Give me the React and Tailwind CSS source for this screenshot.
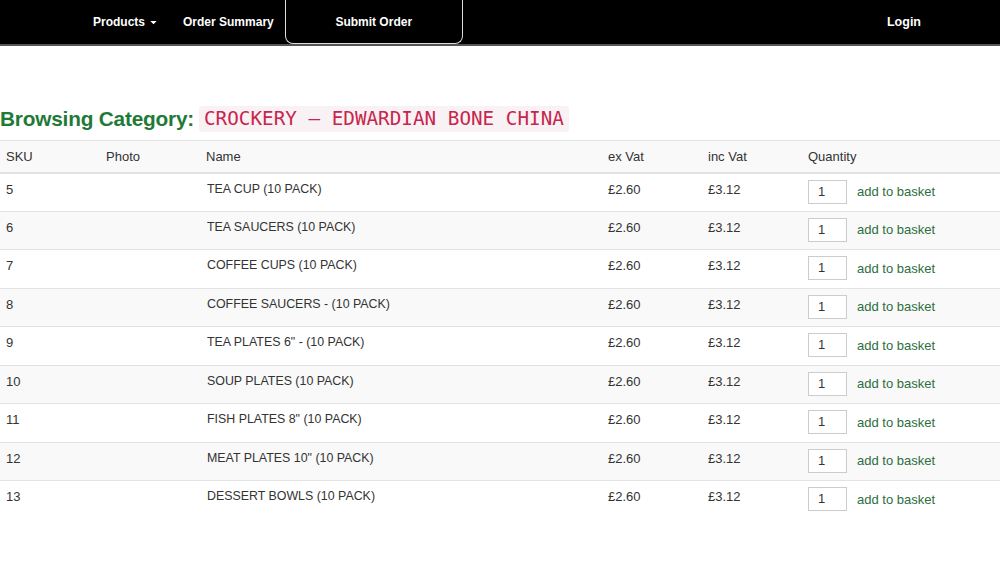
import React from "react";

const rows = [
  ["5", "TEA CUP (10 PACK)"],
  ["6", "TEA SAUCERS (10 PACK)"],
  ["7", "COFFEE CUPS (10 PACK)"],
  ["8", "COFFEE SAUCERS - (10 PACK)"],
  ["9", "TEA PLATES 6\" - (10 PACK)"],
  ["10", "SOUP PLATES (10 PACK)"],
  ["11", "FISH PLATES 8\" (10 PACK)"],
  ["12", "MEAT PLATES 10\" (10 PACK)"],
  ["13", "DESSERT BOWLS (10 PACK)"],
];

export default function App() {
  return (
    <div className="w-[1000px] h-[562px] bg-white overflow-hidden text-[#333]" style={{ fontFamily: '"Liberation Sans", Arial, sans-serif' }}>
      <nav className="h-[46px] bg-black border-b-2 border-[#555] flex items-center text-white text-[12px] font-bold">
        <div className="w-[93px]" />
        <div className="flex items-center gap-[5px]">
          <span>Products</span>
          <svg width="7" height="4" viewBox="0 0 8 5" className="mt-[1px]"><path d="M0 0 L8 0 L4 4 Z" fill="white" /></svg>
        </div>
        <div className="ml-[26px]">Order Summary</div>
        <div className="ml-[11px] w-[178px] h-[46px] mt-[-2px] border-[1.5px] border-t-0 border-[#ddd] rounded-b-[8px] flex items-center justify-center pt-[3px]">
          Submit Order
        </div>
        <div className="ml-auto mr-[79px] text-[12.5px]">Login</div>
      </nav>
      <div className="h-[58px]" />
      <h3 className="flex items-center h-[30px] text-[20.8px] text-[#1f7a37] leading-none">
        <span className="font-bold tracking-[-0.2px]">Browsing Category:</span>
        <code className="ml-[5px] px-[5px] py-[3px] bg-[#f9f2f4] text-[#c7254e] rounded-[3px] text-[19.3px] font-normal" style={{ fontFamily: '"DejaVu Sans Mono", "Liberation Mono", monospace' }}>
          CROCKERY – EDWARDIAN BONE CHINA
        </code>
      </h3>
      <div className="h-[6px]" />
      <table className="w-[1000px] border-collapse text-[13px] table-fixed">
        <colgroup>
          <col className="w-[100px]" />
          <col className="w-[100px]" />
          <col className="w-[400px]" />
          <col className="w-[100px]" />
          <col className="w-[100px]" />
          <col className="w-[200px]" />
        </colgroup>
        <thead>
          <tr className="bg-[#f9f9f9] h-[32px] border-t border-[#e3e3e3] border-b-2">
            {["SKU", "Photo", "Name", "ex Vat", "inc Vat", "Quantity"].map((h, i) => (
              <th key={h} className={`text-left font-normal align-middle pt-[1px] ${i >= 3 ? "px-[8px]" : "px-[6px]"}`}>{h}</th>
            ))}
          </tr>
        </thead>
        <tbody>
          {rows.map(([sku, name], i) => (
            <tr key={sku} className={`h-[38.5px] border-t border-[#e3e3e3] ${i % 2 === 1 ? "bg-[#f9f9f9]" : "bg-white"}`}>
              <td className="px-[6px] align-top pt-[6px]">{sku}</td>
              <td className="px-[6px]"></td>
              <td className="px-[7px] align-top pt-[6px] text-[12.4px]">{name}</td>
              <td className="px-[8px] align-top pt-[6px]">£2.60</td>
              <td className="px-[8px] align-top pt-[6px]">£3.12</td>
              <td className="px-[8px] align-top pt-[6px]">
                <div className="flex items-center">
                  <div className="w-[39px] h-[24px] border border-[#ccc] bg-white flex items-center pl-[9px] text-[13px]">1</div>
                  <span className="ml-[10px] text-[#2e6e40] mt-[1px]">add to basket</span>
                </div>
              </td>
            </tr>
          ))}
        </tbody>
      </table>
    </div>
  );
}
